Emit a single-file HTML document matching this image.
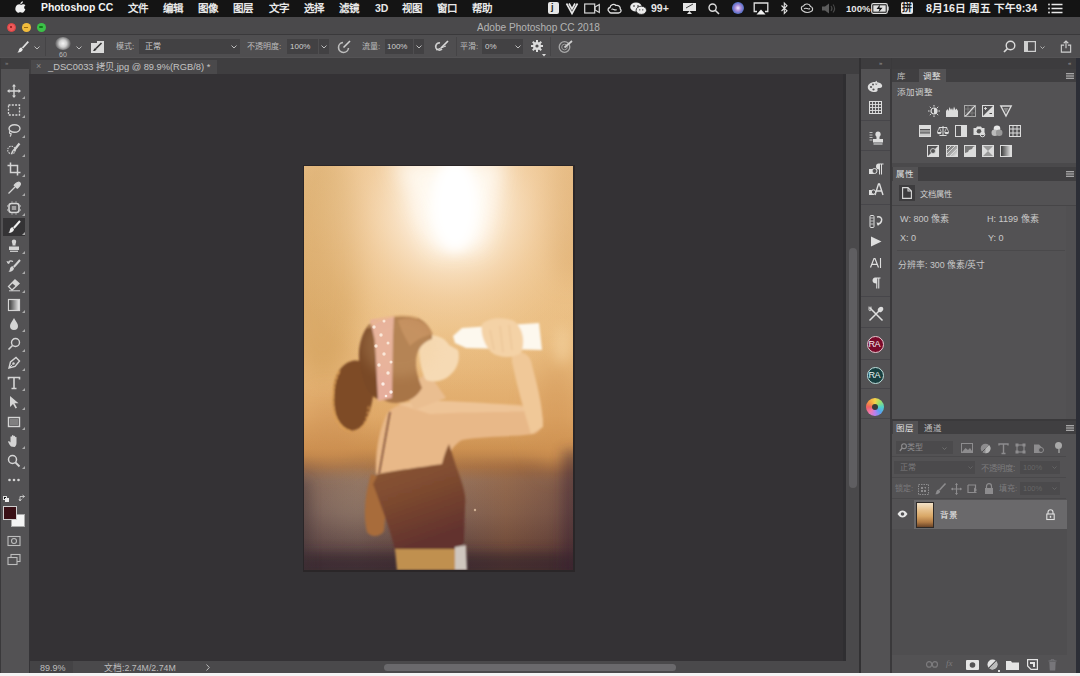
<!DOCTYPE html>
<html lang="zh-CN">
<head>
<meta charset="utf-8">
<style>
*{margin:0;padding:0;box-sizing:border-box;}
html,body{width:1080px;height:676px;overflow:hidden;background:#353437;font-family:"Liberation Sans",sans-serif;position:relative;}
.a{position:absolute;}
.t{position:absolute;white-space:nowrap;line-height:1;}
svg{position:absolute;overflow:visible;}
#menubar{left:0;top:0;width:1080px;height:17px;background:#141414;}
#menubar .t{color:#e8e8e8;font-size:10.5px;top:3px;font-weight:600;}
#titlebar{left:0;top:17px;width:1080px;height:18px;background:#4a494b;border-bottom:1px solid #3a393b;}
#opts{left:0;top:35px;width:1080px;height:23px;background:#4f4e50;border-bottom:1px solid #545355;}
#opts .t{color:#bdbdbd;font-size:8px;top:8px;}
.box{position:absolute;background:#444345;}
#tabstrip{left:29px;top:58px;width:831px;height:16px;background:#3f3e40;}
#canvas{left:30px;top:74px;width:816px;height:587px;background:#343235;}
#toolbar{left:0;top:58px;width:29px;height:615px;background:#535254;}
#status{left:30px;top:661px;width:816px;height:12px;background:#4a494b;}
#white{left:0;top:673px;width:1080px;height:3px;background:#f4f4f4;}
</style>
</head>
<body>
<!-- MENU BAR -->
<div id="menubar" class="a">
  <svg style="left:15.5px;top:1px" width="10" height="12" viewBox="0 0 11 13"><path d="M7.6 0.2c0.1 0.9-0.3 1.7-0.8 2.2-0.5 0.6-1.3 1-2 0.9-0.1-0.8 0.3-1.6 0.8-2.1 0.5-0.6 1.4-1 2-1zM10.3 9.3c-0.3 0.7-0.5 1-0.9 1.6-0.6 0.9-1.4 1.9-2.4 1.9-0.9 0-1.1-0.6-2.3-0.6-1.2 0-1.5 0.6-2.4 0.6-1 0-1.7-1-2.3-1.8C-1.6 8.6-0.1 5 1.5 4c0.6-0.4 1.3-0.6 2-0.6 0.9 0 1.5 0.6 2.3 0.6 0.7 0 1.2-0.6 2.3-0.6 0.8 0 1.7 0.4 2.3 1.2-2 1.1-1.7 4 -0.1 4.7z" fill="#f0f0f0"/></svg>
  <div class="t" style="left:41px;top:3px;font-size:10.4px;font-weight:bold;color:#f4f4f4">Photoshop CC</div>
  <div class="t" style="left:128px">文件</div>
  <div class="t" style="left:163px">编辑</div>
  <div class="t" style="left:198px">图像</div>
  <div class="t" style="left:233px">图层</div>
  <div class="t" style="left:269px">文字</div>
  <div class="t" style="left:304px">选择</div>
  <div class="t" style="left:339px">滤镜</div>
  <div class="t" style="left:375px">3D</div>
  <div class="t" style="left:402px">视图</div>
  <div class="t" style="left:437px">窗口</div>
  <div class="t" style="left:472px">帮助</div>
  <!-- status icons -->
  <div class="a" style="left:548px;top:2px;width:11px;height:12px;background:#e6e6e6;border-radius:2px"></div>
  <div class="t" style="left:551px;top:3px;font-size:9px;color:#222;font-weight:bold">j</div>
  <svg style="left:566px;top:3px" width="12" height="11" viewBox="0 0 12 11"><path d="M0.5 0.5L6 10.5L11.5 0.5M3 0.5L6 6L9 0.5" stroke="#e8e8e8" stroke-width="1.6" fill="none"/></svg>
  <svg style="left:584px;top:3px" width="16" height="11" viewBox="0 0 16 11"><rect x="0.7" y="1" width="10" height="9" stroke="#d8d8d8" stroke-width="1.2" fill="none"/><path d="M11 4L15.3 1.5V9.5L11 7z" stroke="#d8d8d8" stroke-width="1.2" fill="none"/></svg>
  <svg style="left:607px;top:3px" width="15" height="11" viewBox="0 0 15 11"><path d="M2 8.5C0.5 7.5 0.8 4.8 3 4.5 3.5 1.5 7 0.5 9 2.5 11 1.8 13.5 3.5 13.3 6 15 7.5 13.8 10 11.5 10H4C3 10 2.5 9.5 2 8.5z" stroke="#e0e0e0" stroke-width="1.3" fill="none"/><path d="M4.5 6.5c1.5-2 3 2 5 0" stroke="#e0e0e0" stroke-width="1.2" fill="none"/></svg>
  <svg style="left:630px;top:2px" width="17" height="13" viewBox="0 0 17 13"><ellipse cx="6" cy="5" rx="5.8" ry="4.6" fill="#ececec"/><ellipse cx="11.3" cy="8.3" rx="5.2" ry="4.1" fill="#ececec" stroke="#141414" stroke-width="0.8"/><circle cx="4" cy="4" r="0.8" fill="#141414"/><circle cx="8" cy="4" r="0.8" fill="#141414"/><circle cx="9.8" cy="7.8" r="0.6" fill="#141414"/><circle cx="12.8" cy="7.8" r="0.6" fill="#141414"/></svg>
  <div class="t" style="left:651px;top:3px;font-size:10.5px;color:#e6e6e6">99+</div>
  <svg style="left:682px;top:2px" width="15" height="13" viewBox="0 0 15 13"><path d="M1 1H14V9H1z" fill="#e6e6e6"/><path d="M5 12H10L7.5 9z" fill="#e6e6e6"/><path d="M4 6L11 2" stroke="#141414" stroke-width="0.8"/></svg>
  <svg style="left:708px;top:3px" width="12" height="12" viewBox="0 0 12 12"><circle cx="4.6" cy="4.6" r="3.6" stroke="#dcdcdc" stroke-width="1.4" fill="none"/><path d="M7.2 7.2L11 11" stroke="#dcdcdc" stroke-width="1.6"/></svg>
  <div class="a" style="left:732px;top:2px;width:12px;height:12px;border-radius:50%;background:radial-gradient(circle at 50% 50%,#f2e9ff 0,#a98ad8 35%,#5a73c8 65%,#3a2d60 100%)"></div>
  <svg style="left:753px;top:2px" width="16" height="13" viewBox="0 0 16 13"><path d="M4 9.5H1.2V1H14.8V9.5H12" stroke="#e0e0e0" stroke-width="1.3" fill="none"/><path d="M3.5 12.5H12.5L8 7.5z" fill="#f2f2f2"/></svg>
  <svg style="left:780px;top:2px" width="9" height="13" viewBox="0 0 9 13"><path d="M1.5 3.5L7 8.8L4.3 11.5V1L7 3.7L1.5 9" stroke="#e0e0e0" stroke-width="1.1" fill="none"/></svg>
  <svg style="left:800px;top:3px" width="14" height="11" viewBox="0 0 14 11"><path d="M3 8C0.5 6.5 1 3 3.5 3 5 0 9.5 0.5 10.5 3.5 13 4 13.5 7.5 11 8.5 8 10 5 9.5 3 8z" stroke="#d0d0d0" stroke-width="1.2" fill="none"/><path d="M4 6c2-2.5 4 1.5 6-0.5" stroke="#d0d0d0" stroke-width="1.1" fill="none"/></svg>
  <svg style="left:821px;top:3px" width="16" height="11" viewBox="0 0 16 11"><path d="M1 3.5H4L8 0.5V10.5L4 7.5H1z" fill="#5c5c5c"/><path d="M10 3c1.2 1.5 1.2 3.5 0 5M12 1.5c2 2.5 2 5.5 0 8" stroke="#4a4a4a" stroke-width="1.1" fill="none"/></svg>
  <div class="t" style="left:846px;top:4px;font-size:9.6px;color:#e6e6e6">100%</div>
  <svg style="left:871px;top:3px" width="19" height="11" viewBox="0 0 19 11"><rect x="0.7" y="0.7" width="15.6" height="9.6" rx="1.5" stroke="#e0e0e0" stroke-width="1.2" fill="none"/><rect x="2.3" y="2.3" width="12.4" height="6.4" fill="#e0e0e0"/><path d="M17 3.5V7.5" stroke="#e0e0e0" stroke-width="1.4"/><path d="M9 1.5L5.5 6H8.5L7.5 9.5L11.5 4.8H8.5z" fill="#141414"/></svg>
  <div class="a" style="left:901px;top:2px;width:12px;height:12px;background:#e8e8e8;border-radius:2px"></div>
  <div class="t" style="left:901.5px;top:3px;font-size:10px;color:#181818">拼</div>
  <div class="t" style="left:926px;top:3px;font-size:10.7px;color:#ececec">8月16日 周五 下午9:34</div>
  <svg style="left:1048px;top:3px" width="15" height="11" viewBox="0 0 15 11"><path d="M3.5 1.5H14.5M3.5 5.5H14.5M3.5 9.5H14.5" stroke="#e8e8e8" stroke-width="1.4"/><circle cx="1" cy="1.5" r="0.9" fill="#e8e8e8"/><circle cx="1" cy="5.5" r="0.9" fill="#e8e8e8"/><circle cx="1" cy="9.5" r="0.9" fill="#e8e8e8"/></svg>
</div>
<!-- TITLE BAR -->
<div id="titlebar" class="a">
  <div class="a" style="left:6.5px;top:5.5px;width:9px;height:9px;border-radius:50%;background:#ee5a5a;border:0.5px solid #d44"></div>
  <div class="a" style="left:7.5px;top:6.5px;width:0;height:0"></div>
  <div class="a" style="left:21.5px;top:5.5px;width:9px;height:9px;border-radius:50%;background:#f2bc3c"></div>
  <div class="a" style="left:36.5px;top:5.5px;width:9px;height:9px;border-radius:50%;background:#3cc048"></div>
  <div class="a" style="left:10px;top:9px;width:2px;height:2px;border-radius:50%;background:#8a1414"></div>
  <div class="a" style="left:24px;top:9.5px;width:4px;height:1px;background:#9a6a10"></div>
  <div class="a" style="left:39px;top:9px;width:4px;height:2px;border-radius:1px;background:#107a18"></div>
  <div class="t" style="left:477px;top:6px;font-size:10.1px;color:#b4b4b4">Adobe Photoshop CC 2018</div>
</div>
<!-- OPTIONS BAR -->
<div id="opts" class="a">
  <svg style="left:17px;top:6px" width="12" height="12" viewBox="0 0 12 12"><path d="M11.3 0.7L5.5 7" stroke="#e0e0e0" stroke-width="1.8"/><path d="M4.6 6.4C2.8 6.4 2 8 1.8 9.2 1.6 10.3 1 10.9 0.4 11.4 2.8 11.6 5.2 10.7 5.8 8.4z" fill="#e8e8e8"/></svg>
  <svg style="left:34px;top:11px" width="6" height="4" viewBox="0 0 6 4"><path d="M0.5 0.5L3 3L5.5 0.5" stroke="#bdbdbd" stroke-width="1" fill="none"/></svg>
  <div class="a" style="left:45px;top:2px;width:1px;height:19px;background:#454446"></div>
  <div class="a" style="left:55px;top:2px;width:16px;height:13px;border-radius:50%;background:radial-gradient(circle,#f4f4f4 0,#cfcfcf 35%,rgba(120,120,120,0.3) 75%,rgba(80,80,80,0) 100%)"></div>
  <div class="t" style="left:59px;top:16px;font-size:7px;color:#bbb">60</div>
  <svg style="left:76px;top:11px" width="6" height="4" viewBox="0 0 6 4"><path d="M0.5 0.5L3 3L5.5 0.5" stroke="#bdbdbd" stroke-width="1" fill="none"/></svg>
  <div class="a" style="left:91px;top:5.5px;width:13px;height:12px;background:#dadada"></div>
  <div class="a" style="left:91px;top:5.5px;width:6px;height:2px;background:#4f4e50"></div>
  <svg style="left:92px;top:7px" width="11" height="10" viewBox="0 0 11 10"><path d="M9.5 1L4 6.5" stroke="#333" stroke-width="1.6"/><path d="M3.5 6C2 6.5 1.8 8 1 9 2.5 9 4 8.5 4.6 7.2z" fill="#333"/></svg>
  <div class="t" style="left:116px">模式:</div>
  <div class="box" style="left:139px;top:4px;width:101px;height:15px;background:#424143"></div>
  <div class="t" style="left:145px;color:#cfcfcf">正常</div>
  <svg style="left:231px;top:10px" width="6" height="4" viewBox="0 0 6 4"><path d="M0.5 0.5L3 3L5.5 0.5" stroke="#bdbdbd" stroke-width="1" fill="none"/></svg>
  <div class="t" style="left:247px">不透明度:</div>
  <div class="box" style="left:287px;top:4px;width:31px;height:15px;background:#424143"></div>
  <div class="t" style="left:290px;color:#d0d0d0">100%</div>
  <div class="box" style="left:319px;top:4px;width:10px;height:15px;background:#424143"></div>
  <svg style="left:321px;top:10px" width="6" height="4" viewBox="0 0 6 4"><path d="M0.5 0.5L3 3L5.5 0.5" stroke="#bdbdbd" stroke-width="1" fill="none"/></svg>
  <svg style="left:337px;top:5px" width="14" height="13" viewBox="0 0 14 13"><path d="M6 2.5A5 5 0 1 0 11.5 8" stroke="#bdbdbd" stroke-width="1.6" fill="none"/><path d="M13 1L6.5 7.5" stroke="#cfcfcf" stroke-width="1.6"/></svg>
  <div class="t" style="left:362px">流量:</div>
  <div class="box" style="left:385px;top:4px;width:28px;height:15px;background:#424143"></div>
  <div class="t" style="left:387px;color:#d0d0d0">100%</div>
  <div class="box" style="left:414px;top:4px;width:10px;height:15px;background:#424143"></div>
  <svg style="left:416px;top:10px" width="6" height="4" viewBox="0 0 6 4"><path d="M0.5 0.5L3 3L5.5 0.5" stroke="#bdbdbd" stroke-width="1" fill="none"/></svg>
  <svg style="left:434px;top:5px" width="15" height="13" viewBox="0 0 15 13"><path d="M6 3C3 2.5 1 5 2 8 3 10.5 6.5 10.5 8 9" stroke="#cfcfcf" stroke-width="1.7" fill="none"/><path d="M14 1L7 8" stroke="#d8d8d8" stroke-width="1.7"/><path d="M2 10L12 6" stroke="#d8d8d8" stroke-width="1"/></svg>
  <div class="a" style="left:456px;top:2px;width:1px;height:19px;background:#454446"></div>
  <div class="t" style="left:460px">平滑:</div>
  <div class="box" style="left:482px;top:4px;width:41px;height:15px;background:#424143"></div>
  <div class="t" style="left:485px;color:#d0d0d0">0%</div>
  <svg style="left:515px;top:10px" width="6" height="4" viewBox="0 0 6 4"><path d="M0.5 0.5L3 3L5.5 0.5" stroke="#bdbdbd" stroke-width="1" fill="none"/></svg>
  <svg style="left:531px;top:5px" width="12" height="12" viewBox="0 0 12 12"><g fill="#dcdcdc"><circle cx="6" cy="6" r="4"/><rect x="5" y="0" width="2" height="12"/><rect x="0" y="5" width="12" height="2"/><rect x="5" y="0" width="2" height="12" transform="rotate(45 6 6)"/><rect x="5" y="0" width="2" height="12" transform="rotate(-45 6 6)"/></g><circle cx="6" cy="6" r="1.6" fill="#4f4e50"/></svg>
  <svg style="left:542px;top:19px" width="4" height="3" viewBox="0 0 4 3"><path d="M0 0H4L2 2.5z" fill="#ddd"/></svg>
  <div class="a" style="left:550px;top:2px;width:1px;height:19px;background:#454446"></div>
  <svg style="left:558px;top:5px" width="15" height="13" viewBox="0 0 15 13"><circle cx="6.5" cy="7" r="5.3" stroke="#a8a8a8" stroke-width="1.3" fill="none"/><circle cx="6.5" cy="7" r="2.8" stroke="#9a9a9a" stroke-width="1" fill="none"/><path d="M14 1L6.5 7.5" stroke="#d0d0d0" stroke-width="1.7"/></svg>
  <svg style="left:1003px;top:5px" width="13" height="13" viewBox="0 0 13 13"><circle cx="7.5" cy="5.5" r="4.3" stroke="#dadada" stroke-width="1.4" fill="none"/><path d="M4.5 8.5L1 12" stroke="#dadada" stroke-width="1.7"/></svg>
  <svg style="left:1024px;top:6px" width="12" height="11" viewBox="0 0 12 11"><rect x="0.6" y="0.6" width="10.8" height="9.8" stroke="#cfcfcf" stroke-width="1.2" fill="none"/><rect x="1" y="1" width="3" height="9" fill="#cfcfcf"/></svg>
  <svg style="left:1040px;top:11px" width="5" height="3" viewBox="0 0 5 3"><path d="M0.5 0.5L2.5 2.5L4.5 0.5" stroke="#bdbdbd" stroke-width="0.9" fill="none"/></svg>
  <svg style="left:1059.5px;top:4.5px" width="12" height="13" viewBox="0 0 12 14"><path d="M4 5.5H1V13H11V5.5H8" stroke="#d0d0d0" stroke-width="1.2" fill="none"/><path d="M6 9V1M3.5 3.5L6 1L8.5 3.5" stroke="#d0d0d0" stroke-width="1.2" fill="none"/></svg>
</div>
<div id="tabstrip" class="a"></div>
<div class="a" style="left:31px;top:60px;width:186px;height:14px;background:#4a494b"></div>
<div class="t" style="left:36px;top:62px;font-size:9px;color:#8a8a8a">×</div>
<div class="t" style="left:48px;top:62.5px;font-size:9.3px;color:#c4c4c4">_DSC0033 拷贝.jpg @ 89.9%(RGB/8) *</div>
<div id="canvas" class="a"></div>
<!-- PHOTO -->
<div class="a" style="left:302.5px;top:164.5px;width:272px;height:407px;background:#2a2628"></div>
<svg style="left:304px;top:166px;overflow:hidden" width="269" height="404" viewBox="0 0 269 404">
<defs>
  <linearGradient id="bg1" x1="0" y1="0" x2="0" y2="1">
    <stop offset="0" stop-color="#e2b070"/>
    <stop offset="0.4" stop-color="#e6b676"/>
    <stop offset="0.62" stop-color="#dca25e"/>
    <stop offset="0.7" stop-color="#c88a48"/>
    <stop offset="0.745" stop-color="#a87040"/>
    <stop offset="0.78" stop-color="#8e6e5c"/>
    <stop offset="0.86" stop-color="#7a6058"/>
    <stop offset="0.93" stop-color="#5e4644"/>
    <stop offset="1" stop-color="#443038"/>
  </linearGradient>
  <linearGradient id="gnd" x1="0" y1="0" x2="1" y2="0">
    <stop offset="0" stop-color="#5a4448" stop-opacity="0.4"/>
    <stop offset="0.2" stop-color="#887468" stop-opacity="0.25"/>
    <stop offset="0.5" stop-color="#8a5a40" stop-opacity="0.1"/>
    <stop offset="0.75" stop-color="#8a5430" stop-opacity="0.45"/>
    <stop offset="1" stop-color="#5a3430" stop-opacity="0.55"/>
  </linearGradient>
  <linearGradient id="gndv" x1="0" y1="0" x2="0" y2="1">
    <stop offset="0" stop-color="#000"/>
    <stop offset="0.15" stop-color="#fff"/>
    <stop offset="1" stop-color="#fff"/>
  </linearGradient>
  <mask id="gm"><rect y="290" width="269" height="114" fill="url(#gndv)"/></mask>
  <radialGradient id="sun" cx="148" cy="45" r="175" gradientUnits="userSpaceOnUse">
    <stop offset="0" stop-color="#fffefa" stop-opacity="1"/>
    <stop offset="0.2" stop-color="#fff4e6" stop-opacity="0.9"/>
    <stop offset="0.5" stop-color="#f8dab4" stop-opacity="0.55"/>
    <stop offset="0.8" stop-color="#f0c890" stop-opacity="0.2"/>
    <stop offset="1" stop-color="#f0c890" stop-opacity="0"/>
  </radialGradient>
  <linearGradient id="topg" x1="0" y1="0" x2="0.3" y2="1">
    <stop offset="0" stop-color="#8e5a30"/>
    <stop offset="0.45" stop-color="#824e30"/>
    <stop offset="1" stop-color="#62322e"/>
  </linearGradient>
  <linearGradient id="haze" x1="0" y1="0" x2="0" y2="1">
    <stop offset="0" stop-color="#f6d8b0" stop-opacity="0.4"/>
    <stop offset="0.5" stop-color="#f2cc98" stop-opacity="0.3"/>
    <stop offset="0.72" stop-color="#ecc090" stop-opacity="0.1"/>
    <stop offset="1" stop-color="#e8b878" stop-opacity="0"/>
  </linearGradient>
  <filter id="b1" x="-20%" y="-20%" width="140%" height="140%"><feGaussianBlur stdDeviation="1.1"/></filter>
  <filter id="b2" x="-50%" y="-50%" width="200%" height="200%"><feGaussianBlur stdDeviation="2"/></filter>
  <filter id="b4" x="-100%" y="-100%" width="300%" height="300%"><feGaussianBlur stdDeviation="4"/></filter>
  <filter id="b6" x="-200%" y="-200%" width="500%" height="500%"><feGaussianBlur stdDeviation="6"/></filter>
  <filter id="b10" x="-100%" y="-100%" width="300%" height="300%"><feGaussianBlur stdDeviation="10"/></filter>
  <filter id="b12" x="-200%" y="-100%" width="500%" height="300%"><feGaussianBlur stdDeviation="12"/></filter>
</defs>
<rect width="269" height="404" fill="url(#bg1)"/>
<rect y="290" width="269" height="114" fill="url(#gnd)" mask="url(#gm)"/>
<g transform="translate(-304,-166)">
  <ellipse cx="322" cy="265" rx="40" ry="115" fill="#c48c40" opacity="0.7" filter="url(#b12)"/>
  <ellipse cx="330" cy="195" rx="28" ry="34" fill="#c99850" opacity="0.5" filter="url(#b12)"/>
  <ellipse cx="330" cy="430" rx="26" ry="34" fill="#c88848" opacity="0.55" filter="url(#b12)"/>
  <ellipse cx="566" cy="215" rx="22" ry="65" fill="#c88c44" opacity="0.7" filter="url(#b12)"/>
  <ellipse cx="556" cy="415" rx="22" ry="55" fill="#cc8c48" opacity="0.6" filter="url(#b12)"/>
  <ellipse cx="562" cy="345" rx="9" ry="18" fill="#f4d4a0" opacity="0.6" filter="url(#b6)"/>
  <ellipse cx="350" cy="505" rx="30" ry="22" fill="#907a6c" opacity="0.35" filter="url(#b12)"/>
  <rect x="290" y="552" width="300" height="24" fill="#32222a" opacity="0.65" filter="url(#b6)"/>
  <rect x="290" y="480" width="20" height="100" fill="#3e3036" opacity="0.45" filter="url(#b6)"/>
  <rect x="562" y="450" width="20" height="130" fill="#3a2430" opacity="0.5" filter="url(#b6)"/>
</g>
<rect width="269" height="404" fill="url(#haze)"/>
<rect width="269" height="404" fill="url(#sun)"/>
<g transform="translate(-304,-166)">
  <path d="M392 160 L505 160 L482 250 L436 252 Z" fill="#fffaf2" opacity="0.9" filter="url(#b10)"/>
  <ellipse cx="455" cy="205" rx="24" ry="46" fill="#ffffff" filter="url(#b6)"/>
  <!-- figure -->
  <g filter="url(#b1)">
  <path d="M388 412 C398 402 420 399 440 401 C470 403 510 404 538 410 C546 418 544 430 534 434 C510 437 482 436 462 440 C455 444 450 450 448 460 L446 472 L376 474 C375 450 380 426 388 412 Z" fill="#e8b888"/>
  <path d="M398 404 C420 398 470 402 520 405 L538 410 C520 413 470 411 430 414 Z" fill="#f0c89c" opacity="0.75"/>
  <path d="M371 474 C365 494 363 515 367 532 C371 538 380 537 384 531 L388 480 Z" fill="#a86c3a"/>
  <path d="M405 390 L428 372 L446 398 L414 410 Z" fill="#eabe90"/>
  <path d="M512 354 C520 350 528 353 531 361 C536 381 543 405 543 427 L531 434 C524 411 517 386 512 362 Z" fill="#f0c898"/>
  <path d="M453 336 L462 328 L539 323 L542 350 L466 348 L455 343 Z" fill="#fdf8ee"/>
  <path d="M482 324 C490 317 504 317 514 321 C522 327 526 341 521 353 C513 359 499 358 491 352 C485 345 480 334 482 324 Z" fill="#f4d2a6"/>
  <path d="M490 330 L494 350 M500 326 L503 352 M509 325 L512 350" stroke="#dcae80" stroke-width="0.8" opacity="0.6"/>
  <path d="M420 338 C432 333 444 336 449 345 L458 350 C461 360 456 370 451 374 C445 381 434 383 426 380 C420 370 418 352 420 338 Z" fill="#f6dab4"/>
  <path d="M352 361 C340 364 333 378 334 392 C331 407 336 422 346 429 C354 433 363 428 367 418 C373 405 375 388 373 374 C371 365 362 359 352 361 Z" fill="#7e4c28"/>
  <path d="M339 372 C332 384 331 402 335 416 C338 424 344 430 350 431 M362 428 C366 422 368 414 369 404" stroke="#dc9a50" stroke-width="2" stroke-dasharray="3 2" fill="none" opacity="0.7"/>
  <path d="M368 328 C380 316 402 313 418 318 C428 323 433 331 432 339 C426 341 420 345 417 354 C414 366 418 378 422 388 C416 398 408 402 396 403 C384 403 375 396 369 382 C363 367 362 344 368 328 Z" fill="#a87446"/>
  <path d="M398 320 C412 315 428 321 433 334 C424 336 416 340 410 346 C404 336 400 328 398 320 Z" fill="#c08a58" opacity="0.8"/>
  <path d="M361 340 C364 330 368 325 372 323 L381 400 C371 398 364 388 362 375 C358 360 358 350 361 340 Z" fill="#7a4a28"/>
  <path d="M370 320 L394 316 L393 336 L392 398 L378 401 L375 340 Z" fill="#e6ae9c"/>
  <path d="M378 474 C398 470 430 466 442 464 C444 456 446 450 449 444 L456 466 C461 480 467 494 465 506 L464 541 C462 548 459 550 455 551 L395 551 C392 535 382 508 373 484 Z" fill="url(#topg)"/>
  <path d="M395 549 L458 549 L460 570 L397 570 Z" fill="#c09050"/>
  <path d="M455 547 L466 545 L467 570 L455 570 Z" fill="#cfc6be"/>
  </g>
  <g fill="#fff4ee" opacity="0.9">
    <circle cx="374" cy="327" r="1.7"/><circle cx="381" cy="335" r="1.7"/><circle cx="376" cy="346" r="1.7"/><circle cx="384" cy="354" r="1.7"/><circle cx="379" cy="365" r="1.7"/><circle cx="388" cy="373" r="1.7"/><circle cx="383" cy="384" r="1.7"/><circle cx="391" cy="392" r="1.7"/><circle cx="391" cy="362" r="1.5"/><circle cx="388" cy="343" r="1.5"/><circle cx="384" cy="321" r="1.5"/><circle cx="386" cy="396" r="1.3"/>
  </g>
  <path d="M390 412 L379 474" stroke="#6a3a28" stroke-width="1.4" filter="url(#b1)"/>
  <path d="M340 370 C333 382 332 400 335 414 C338 424 343 429 350 431" stroke="#eab060" stroke-width="1.6" fill="none" opacity="0.55" filter="url(#b1)"/>
  <path d="M368 328 C380 316 402 313 418 318" stroke="#f0c080" stroke-width="2" fill="none" opacity="0.5" filter="url(#b1)"/>
  <ellipse cx="400" cy="345" rx="38" ry="32" fill="#f2cc98" opacity="0.18" filter="url(#b6)"/>
  <circle cx="475" cy="510" r="1.2" fill="#f0d0b0" opacity="0.7"/>
</g>
</svg>
<!-- TOOLBAR -->
<div id="toolbar" class="a">
  <div class="a" style="left:0;top:0;width:29px;height:11px;background:#3e3d3f"></div><div class="a" style="left:0;top:0;width:1px;height:615px;background:#3a393b"></div>
  <div class="t" style="left:5px;top:2px;font-size:6px;color:#888">»</div>
  <div class="a" style="left:3px;top:160px;width:22px;height:18px;background:#343335"></div>
  <svg style="left:7px;top:26px" width="14" height="14" viewBox="0 0 14 14"><path d="M7 1V13M1 7H13" stroke="#d4d4d4" stroke-width="1.4"/><path d="M7 0L5 2.5H9zM7 14L5 11.5H9zM0 7L2.5 5V9zM14 7L11.5 5V9z" fill="#d4d4d4"/></svg>
  <svg style="left:22px;top:38px" width="3" height="3" viewBox="0 0 3 3"><path d="M3 0V3H0z" fill="#aaa"/></svg>
  <svg style="left:7px;top:45px" width="14" height="14" viewBox="0 0 14 14"><rect x="1.5" y="2" width="11" height="10" stroke="#d4d4d4" stroke-width="1.3" stroke-dasharray="2 1.3" fill="none"/></svg>
  <svg style="left:22px;top:57px" width="3" height="3" viewBox="0 0 3 3"><path d="M3 0V3H0z" fill="#aaa"/></svg>
  <svg style="left:7px;top:65px" width="14" height="14" viewBox="0 0 14 14"><ellipse cx="7.5" cy="5.5" rx="5.5" ry="3.8" stroke="#d4d4d4" stroke-width="1.4" fill="none"/><path d="M3 8C2 9.5 2.5 11 4 10.5 4.5 12 3.5 13 3 13.5" stroke="#d4d4d4" stroke-width="1.2" fill="none"/></svg>
  <svg style="left:22px;top:77px" width="3" height="3" viewBox="0 0 3 3"><path d="M3 0V3H0z" fill="#aaa"/></svg>
  <svg style="left:7px;top:84px" width="14" height="14" viewBox="0 0 14 14"><circle cx="4.5" cy="8" r="3.8" stroke="#d4d4d4" stroke-width="1.1" stroke-dasharray="1.5 1" fill="none"/><path d="M12.5 1.5L6.5 9" stroke="#d4d4d4" stroke-width="2.2"/><path d="M6 8.5L4.5 12" stroke="#d4d4d4" stroke-width="1.5"/></svg>
  <svg style="left:22px;top:96px" width="3" height="3" viewBox="0 0 3 3"><path d="M3 0V3H0z" fill="#aaa"/></svg>
  <svg style="left:7px;top:104px" width="14" height="14" viewBox="0 0 14 14"><path d="M3.5 0.5V10.5H13.5M0.5 3.5H10.5V13.5" stroke="#d4d4d4" stroke-width="1.5" fill="none"/></svg>
  <svg style="left:22px;top:116px" width="3" height="3" viewBox="0 0 3 3"><path d="M3 0V3H0z" fill="#aaa"/></svg>
  <svg style="left:7px;top:123px" width="14" height="14" viewBox="0 0 14 14"><path d="M1.5 12.5L8 6" stroke="#d4d4d4" stroke-width="1.3"/><path d="M7 4L10 7M9 2.5C10.5 1 12 1 12.8 1.8 13.6 2.6 13.5 4 12 5.5L10.5 7 7.5 4z" stroke="#d4d4d4" stroke-width="1.3" fill="#d4d4d4"/></svg>
  <svg style="left:22px;top:135px" width="3" height="3" viewBox="0 0 3 3"><path d="M3 0V3H0z" fill="#aaa"/></svg>
  <svg style="left:7px;top:143px" width="14" height="14" viewBox="0 0 14 14"><rect x="2" y="2.5" width="10" height="9" rx="2.5" stroke="#d4d4d4" stroke-width="1.6" fill="none"/><rect x="4.8" y="5" width="4.4" height="4" fill="#d4d4d4" opacity="0.6"/><path d="M1 5H0M1 9H0M13 5H14M13 9H14M5 1.5V0.5M9 1.5V0.5M5 12.5V13.5M9 12.5V13.5" stroke="#d4d4d4" stroke-width="1"/></svg>
  <svg style="left:22px;top:155px" width="3" height="3" viewBox="0 0 3 3"><path d="M3 0V3H0z" fill="#aaa"/></svg>
  <svg style="left:7px;top:162px" width="14" height="14" viewBox="0 0 14 14"><path d="M13 1L6.8 8" stroke="#f0f0f0" stroke-width="2"/><path d="M5.8 7.3C3.8 7.3 3 9 2.8 10.4 2.6 11.6 2 12.3 1.2 12.8 3.8 13 6.5 12 7 9.5z" fill="#f0f0f0"/></svg>
  <svg style="left:22px;top:174px" width="3" height="3" viewBox="0 0 3 3"><path d="M3 0V3H0z" fill="#aaa"/></svg>
  <svg style="left:7px;top:181px" width="14" height="14" viewBox="0 0 14 14"><path d="M5.5 1.5H8.5V6.5H5.5z" fill="#d4d4d4"/><circle cx="7" cy="2.8" r="2.2" fill="#d4d4d4"/><path d="M2 7.5H12V11H2z" fill="#d4d4d4"/><path d="M3 12.3H11" stroke="#d4d4d4" stroke-width="1.2"/></svg>
  <svg style="left:22px;top:193px" width="3" height="3" viewBox="0 0 3 3"><path d="M3 0V3H0z" fill="#aaa"/></svg>
  <svg style="left:7px;top:201px" width="14" height="14" viewBox="0 0 14 14"><path d="M13 1L6.8 8" stroke="#d4d4d4" stroke-width="2"/><path d="M5.8 7.3C3.8 7.3 3 9 2.8 10.4 2.6 11.6 2 12.3 1.2 12.8 3.8 13 6.5 12 7 9.5z" fill="#d4d4d4"/><path d="M1 4C2 2 4 1.5 6 2.5" stroke="#d4d4d4" stroke-width="1.2" fill="none"/><path d="M0 2L1 4.5 3 3.5" stroke="#d4d4d4" stroke-width="1" fill="none"/></svg>
  <svg style="left:22px;top:213px" width="3" height="3" viewBox="0 0 3 3"><path d="M3 0V3H0z" fill="#aaa"/></svg>
  <svg style="left:7px;top:220px" width="14" height="14" viewBox="0 0 14 14"><path d="M5 12L1.5 8.5 8 2 12 5.5z" stroke="#d4d4d4" stroke-width="1.3" fill="none"/><path d="M8 2L12 5.5 9 8.5 5 5z" fill="#d4d4d4"/><path d="M2 12.8H13" stroke="#d4d4d4" stroke-width="1"/></svg>
  <svg style="left:22px;top:232px" width="3" height="3" viewBox="0 0 3 3"><path d="M3 0V3H0z" fill="#aaa"/></svg>
  <svg style="left:7px;top:240px" width="14" height="14" viewBox="0 0 14 14"><defs><linearGradient id="gg" x1="0" x2="1"><stop offset="0" stop-color="#333"/><stop offset="1" stop-color="#eee"/></linearGradient></defs><rect x="1.5" y="1.5" width="11" height="11" stroke="#d4d4d4" stroke-width="1.2" fill="url(#gg)"/></svg>
  <svg style="left:22px;top:252px" width="3" height="3" viewBox="0 0 3 3"><path d="M3 0V3H0z" fill="#aaa"/></svg>
  <svg style="left:7px;top:259px" width="14" height="14" viewBox="0 0 14 14"><path d="M7 1C5 4.5 3 6.5 3 9A4 4 0 0 0 11 9C11 6.5 9 4.5 7 1z" fill="#d4d4d4"/></svg>
  <svg style="left:22px;top:271px" width="3" height="3" viewBox="0 0 3 3"><path d="M3 0V3H0z" fill="#aaa"/></svg>
  <svg style="left:7px;top:279px" width="14" height="14" viewBox="0 0 14 14"><circle cx="8.5" cy="5.5" r="4" stroke="#d4d4d4" stroke-width="1.4" fill="none"/><path d="M5.5 8.5L1.5 12.5" stroke="#d4d4d4" stroke-width="1.6"/></svg>
  <svg style="left:22px;top:291px" width="3" height="3" viewBox="0 0 3 3"><path d="M3 0V3H0z" fill="#aaa"/></svg>
  <svg style="left:7px;top:298px" width="14" height="14" viewBox="0 0 14 14"><path d="M2 12L3.5 6 9 1.5 12.5 5 8 10.5z" stroke="#d4d4d4" stroke-width="1.4" fill="none"/><circle cx="6.5" cy="7.5" r="1.2" fill="#d4d4d4"/><path d="M2 12L5.5 8.5" stroke="#d4d4d4" stroke-width="1"/></svg>
  <svg style="left:22px;top:310px" width="3" height="3" viewBox="0 0 3 3"><path d="M3 0V3H0z" fill="#aaa"/></svg>
  <svg style="left:7px;top:318px" width="14" height="14" viewBox="0 0 14 14"><path d="M1.5 3.5V1.5H12.5V3.5M7 1.5V12.5M4.5 12.5H9.5" stroke="#d4d4d4" stroke-width="1.6" fill="none"/></svg>
  <svg style="left:22px;top:330px" width="3" height="3" viewBox="0 0 3 3"><path d="M3 0V3H0z" fill="#aaa"/></svg>
  <svg style="left:7px;top:337px" width="14" height="14" viewBox="0 0 14 14"><path d="M3 1V12L6 9 8.5 13.5 10 12.8 7.5 8.3H11.5z" fill="#d4d4d4"/></svg>
  <svg style="left:22px;top:349px" width="3" height="3" viewBox="0 0 3 3"><path d="M3 0V3H0z" fill="#aaa"/></svg>
  <svg style="left:7px;top:357px" width="14" height="14" viewBox="0 0 14 14"><rect x="1.5" y="2.5" width="11" height="9" stroke="#d4d4d4" stroke-width="1.4" fill="none"/><rect x="3" y="4" width="8" height="6" fill="#d4d4d4" opacity="0.35"/></svg>
  <svg style="left:22px;top:369px" width="3" height="3" viewBox="0 0 3 3"><path d="M3 0V3H0z" fill="#aaa"/></svg>
  <svg style="left:7px;top:376px" width="14" height="14" viewBox="0 0 14 14"><path d="M4 12.5C2.5 11 1.5 9 1 7.5 1.8 7 2.8 7.3 3.5 8.5V3C3.5 2 5 2 5 3V6.5 1.8C5 0.8 6.5 0.8 6.5 1.8V6.5 2.5C6.5 1.5 8 1.5 8 2.5V7 3.5C8 2.5 9.5 2.5 9.5 3.5V9C9.5 11 8.5 12.5 7.5 13z" fill="#d4d4d4"/></svg>
  <svg style="left:22px;top:388px" width="3" height="3" viewBox="0 0 3 3"><path d="M3 0V3H0z" fill="#aaa"/></svg>
  <svg style="left:7px;top:396px" width="14" height="14" viewBox="0 0 14 14"><circle cx="5.5" cy="5.5" r="4" stroke="#d4d4d4" stroke-width="1.5" fill="none"/><path d="M8.5 8.5L12.5 12.5" stroke="#d4d4d4" stroke-width="1.8"/></svg>
  <svg style="left:22px;top:408px" width="3" height="3" viewBox="0 0 3 3"><path d="M3 0V3H0z" fill="#aaa"/></svg>
  <svg style="left:7px;top:415px" width="14" height="14" viewBox="0 0 14 14"><circle cx="2.5" cy="7" r="1.3" fill="#d4d4d4"/><circle cx="7" cy="7" r="1.3" fill="#d4d4d4"/><circle cx="11.5" cy="7" r="1.3" fill="#d4d4d4"/></svg>
  <svg style="left:7px;top:476px" width="14" height="14" viewBox="0 0 14 14"><rect x="1" y="2.5" width="12" height="9" stroke="#bdbdbd" stroke-width="1.1" fill="none"/><circle cx="7" cy="7" r="2.5" stroke="#bdbdbd" stroke-width="1.1" fill="none"/></svg>
  <svg style="left:7px;top:495px" width="14" height="14" viewBox="0 0 14 14"><rect x="4" y="1.5" width="9" height="7" stroke="#bdbdbd" stroke-width="1.1" fill="none"/><rect x="1" y="4.5" width="9" height="7" stroke="#bdbdbd" stroke-width="1.1" fill="#535254"/></svg>
  <div class="a" style="left:3px;top:438px;width:4px;height:4px;background:#111;border:0.5px solid #ddd"></div>
  <div class="a" style="left:5px;top:440px;width:4px;height:4px;background:#eee"></div>
  <svg style="left:19px;top:437px" width="7" height="7" viewBox="0 0 7 7"><path d="M1 6V1.5H5.5M3.5 0L5.5 1.5 3.5 3M0 4L1 6 2.5 4" stroke="#ccc" stroke-width="0.9" fill="none"/></svg>
  <div class="a" style="left:10.5px;top:456px;width:14px;height:13px;background:#f4f4f4;border:1px solid #aaa"></div>
  <div class="a" style="left:3px;top:448px;width:14px;height:14px;background:#3a1016;border:1px solid #cfcfcf"></div>
</div>
<div id="status" class="a"></div>
<div class="a" style="left:30px;top:661px;width:43px;height:12px;background:#444345"></div>
<div class="t" style="left:40px;top:663.5px;font-size:9px;color:#bdbdbd">89.9%</div>
<div class="t" style="left:104px;top:663.5px;font-size:8.8px;color:#bdbdbd">文档:2.74M/2.74M</div>
<svg style="left:206px;top:664px" width="4" height="7" viewBox="0 0 4 7"><path d="M0.5 0.5L3.3 3.5 0.5 6.5" stroke="#bbb" stroke-width="1" fill="none"/></svg>
<div class="a" style="left:384px;top:664px;width:292px;height:7px;border-radius:3.5px;background:#6a696c"></div>
<div class="a" style="left:843px;top:74px;width:3px;height:587px;background:#2f2e31"></div>
<div class="a" style="left:846px;top:74px;width:14px;height:599px;background:#4a494b"></div>
<div class="a" style="left:849px;top:248px;width:8px;height:240px;border-radius:4px;background:#5f5e61"></div>
<div class="a" style="left:859px;top:58px;width:2px;height:615px;background:#323133"></div>
<!-- ICON COLUMN -->
<div class="a" style="left:861px;top:58px;width:30px;height:615px;background:#535254"></div>
<div class="a" style="left:890px;top:58px;width:2px;height:615px;background:#3a393b"></div>
<div class="a" style="left:861px;top:58px;width:30px;height:11px;background:#3d3c3e"></div>
<div class="a" style="left:861px;top:120px;width:29px;height:1px;background:#47464a"></div>
<div class="a" style="left:861px;top:150px;width:29px;height:1px;background:#47464a"></div>
<div class="a" style="left:861px;top:204px;width:29px;height:1px;background:#47464a"></div>
<div class="a" style="left:861px;top:296px;width:29px;height:1px;background:#47464a"></div>
<div class="a" style="left:861px;top:327px;width:29px;height:1px;background:#47464a"></div>
<div class="a" style="left:861px;top:359px;width:29px;height:1px;background:#47464a"></div>
<div class="a" style="left:861px;top:388px;width:29px;height:1px;background:#47464a"></div>
<div class="a" style="left:861px;top:418px;width:29px;height:1px;background:#47464a"></div>
<svg style="left:867.0px;top:81.0px" width="16" height="12" viewBox="0 0 16 12"><path d="M8 1C3.5 1 0.5 3.5 0.8 6.5 1 9 3.5 11 8 11 10 11 11 10 10.5 8.5 10 7.5 11 6.8 12.5 7 15 7 15.5 5.5 15 4 14 1.8 11 1 8 1z" fill="#dedede"/><circle cx="4" cy="6" r="1.1" fill="#535254"/><circle cx="6.5" cy="8.5" r="1.1" fill="#535254"/><circle cx="6" cy="3.5" r="1" fill="#535254"/><circle cx="9.5" cy="3" r="1" fill="#535254"/><path d="M9 0L10.5 4" stroke="#dedede" stroke-width="1.2"/></svg>
<svg style="left:868.5px;top:100.5px" width="13" height="13" viewBox="0 0 13 13"><rect x="0.5" y="0.5" width="12" height="12" fill="none" stroke="#dedede" stroke-width="1"/><path d="M3.5 0.5V12.5M6.5 0.5V12.5M9.5 0.5V12.5M0.5 3.5H12.5M0.5 6.5H12.5M0.5 9.5H12.5" stroke="#dedede" stroke-width="0.9"/></svg>
<svg style="left:868.5px;top:131.0px" width="15" height="14" viewBox="0 0 15 14"><path d="M0.5 1.5H3.5M0.5 4H3.5M0.5 6.5H3.5M0.5 9H3.5" stroke="#bbb" stroke-width="1"/><circle cx="9" cy="3.2" r="2.6" fill="#dedede"/><path d="M7.5 5H10.5V8H14V11.5H4V8H7.5z" fill="#dedede"/><path d="M4.5 13H13.5" stroke="#dedede" stroke-width="1.1"/></svg>
<svg style="left:868.0px;top:163.0px" width="16" height="12" viewBox="0 0 16 12"><path d="M9.5 0.5H15.5V1.5H14V11.5H13V1.5H12V11.5H11V6.5C9 6.5 8 5.3 8 3.5 8 1.7 9 0.5 10.5 0.5z" fill="#dedede"/><rect x="1" y="6" width="5" height="5" fill="#dedede"/><circle cx="6.5" cy="8" r="2.5" fill="#535254" stroke="#dedede" stroke-width="1"/></svg>
<svg style="left:868.0px;top:182.5px" width="16" height="13" viewBox="0 0 16 13"><path d="M7 12L10.5 1H11.5L15 12M8.5 8H13.5" stroke="#dedede" stroke-width="1.4" fill="none"/><rect x="1" y="7" width="5" height="5" fill="#dedede"/><circle cx="5.5" cy="9" r="2.2" fill="#535254" stroke="#dedede" stroke-width="1"/></svg>
<svg style="left:869.0px;top:214.5px" width="14" height="13" viewBox="0 0 14 13"><rect x="1" y="0.5" width="4" height="12" rx="1" fill="none" stroke="#dedede" stroke-width="1"/><path d="M1.5 3H4.5M1.5 6H4.5M1.5 9H4.5" stroke="#dedede" stroke-width="0.8"/><path d="M8 2C11 1 13.5 3 12.5 6 12 8 10 9 8.5 9.5" stroke="#dedede" stroke-width="1.5" fill="none"/><path d="M7.5 7.5L9 11 11 8z" fill="#dedede"/></svg>
<svg style="left:870.0px;top:235.5px" width="12" height="11" viewBox="0 0 12 11"><path d="M1 0.5L11.5 5.5 1 10.5z" fill="#dedede"/></svg>
<svg style="left:870.0px;top:258.0px" width="12" height="10" viewBox="0 0 12 10"><path d="M0.5 9.5L4 0.5H5L8.5 9.5M2 6.3H7" stroke="#dedede" stroke-width="1.2" fill="none"/><path d="M10.5 0V10" stroke="#dedede" stroke-width="1.1"/></svg>
<svg style="left:871.0px;top:277.0px" width="10" height="12" viewBox="0 0 10 12"><path d="M4 0.5H9.5V1.5H8.3V11.5H7.2V1.5H6.3V11.5H5.2V6.5C3 6.5 1.5 5.3 1.5 3.5 1.5 1.7 3 0.5 4 0.5z" fill="#dedede"/></svg>
<svg style="left:868.0px;top:306.0px" width="16" height="16" viewBox="0 0 16 16"><path d="M1.5 1.5L14.5 14.5M14.5 1.5L1.5 14.5" stroke="#dedede" stroke-width="1.5"/><ellipse cx="12.5" cy="3.5" rx="2.3" ry="3" transform="rotate(45 12.5 3.5)" fill="#dedede"/><path d="M1 0.5V4M3 0.5V4M1 4C1 5 3 5 3 4" stroke="#dedede" stroke-width="0.9" fill="none"/></svg>
<div class="a" style="left:866.5px;top:336px;width:17px;height:17px;border-radius:50%;background:#7a0a2a;border:1.3px solid #e8c8d0"></div>
<div class="t" style="left:868.5px;top:340px;font-size:9px;color:#f2f2f2;letter-spacing:-0.5px">RA</div>
<div class="a" style="left:866.5px;top:367px;width:17px;height:17px;border-radius:50%;background:#173f40;border:1.3px solid #bfe0dd"></div>
<div class="t" style="left:868.5px;top:371px;font-size:9px;color:#e8f4f2;letter-spacing:-0.5px">RA</div>
<div class="a" style="left:866px;top:398px;width:18px;height:18px;border-radius:50%;background:conic-gradient(from 0deg,#f6d24a,#9be06a,#4fd0c8,#5aa0f0,#b880f0,#f07ab0,#f06060,#f6a040,#f6d24a)"></div>
<div class="a" style="left:872px;top:404px;width:6px;height:6px;border-radius:50%;background:#3a3a3a"></div>
<!-- RIGHT PANELS -->
<div class="a" style="left:892px;top:58px;width:188px;height:615px;background:#3d3c3e"></div>
<div class="t" style="left:879px;top:60px;font-size:6px;color:#999">»</div>
<div class="t" style="left:1068px;top:60px;font-size:6px;color:#999">«</div>
<div class="a" style="left:1076px;top:58px;width:4px;height:615px;background:#2c2e36"></div>
<!-- adjustments -->
<div class="a" style="left:892px;top:69px;width:184px;height:13px;background:#403f41"></div>
<div class="a" style="left:919px;top:69px;width:27px;height:13px;background:#535254"></div>
<div class="t" style="left:897px;top:71.5px;font-size:8.5px;color:#bdbdbd">库</div>
<div class="t" style="left:923px;top:71.5px;font-size:8.5px;color:#e0e0e0">调整</div>
<svg style="left:1066px;top:73px" width="8" height="6" viewBox="0 0 8 6"><path d="M0 0.7H8M0 3H8M0 5.3H8" stroke="#c8c8c8" stroke-width="1.1"/></svg>
<div class="a" style="left:892px;top:82px;width:184px;height:81px;background:#535254"></div>
<div class="t" style="left:897px;top:88px;font-size:8.5px;color:#cfcfcf">添加调整</div>
<svg style="left:928px;top:105px" width="12" height="12" viewBox="0 0 12 12"><circle cx="6" cy="6" r="3" fill="none" stroke="#dcdcdc" stroke-width="1.2"/><path d="M6 3A3 3 0 0 1 6 9z" fill="#dcdcdc"/><path d="M6 0V1.6M6 10.4V12M0 6H1.6M10.4 6H12M1.8 1.8L2.9 2.9M9.1 9.1L10.2 10.2M1.8 10.2L2.9 9.1M9.1 2.9L10.2 1.8" stroke="#dcdcdc" stroke-width="1"/></svg>
<svg style="left:946px;top:105px" width="12" height="12" viewBox="0 0 12 12"><path d="M0 11V6L1.5 4 2.5 6 3.5 2 5 5 6 3 7 5.5 8 1.5 9.5 5 10.5 3.5 12 6V11z" fill="#dcdcdc"/><path d="M0 11.5H12" stroke="#dcdcdc" stroke-width="1"/></svg>
<svg style="left:964px;top:105px" width="12" height="12" viewBox="0 0 12 12"><rect x="0.5" y="0.5" width="11" height="11" fill="none" stroke="#aaa" stroke-width="1"/><path d="M4 0.5V11.5M8 0.5V11.5M0.5 4H11.5M0.5 8H11.5" stroke="#888" stroke-width="0.7"/><path d="M1 11C4 10 8 3 11 1" stroke="#dcdcdc" stroke-width="1.3" fill="none"/></svg>
<svg style="left:982px;top:105px" width="12" height="12" viewBox="0 0 12 12"><rect x="0.5" y="0.5" width="11" height="11" fill="none" stroke="#dcdcdc" stroke-width="1"/><path d="M1 11L11 1V11z" fill="#dcdcdc"/><path d="M2 3.5H5M3.5 2V5" stroke="#dcdcdc" stroke-width="0.9"/><path d="M7.5 8.5H10" stroke="#333" stroke-width="0.9"/></svg>
<svg style="left:1000px;top:105px" width="12" height="12" viewBox="0 0 12 12"><path d="M0.8 1H11.2L6 11z" fill="none" stroke="#dcdcdc" stroke-width="1.4"/><path d="M3.5 3H8.5L6 8z" fill="#888"/></svg>
<svg style="left:919px;top:125px" width="12" height="12" viewBox="0 0 12 12"><rect x="0.5" y="0.5" width="11" height="11" fill="none" stroke="#dcdcdc" stroke-width="1"/><rect x="1" y="1" width="10" height="3" fill="#dcdcdc"/><rect x="1" y="5" width="10" height="2.5" fill="#999"/><rect x="1" y="8.5" width="10" height="2.5" fill="#ccc"/></svg>
<svg style="left:937px;top:125px" width="12" height="12" viewBox="0 0 12 12"><path d="M6 1V10M2 2.5H10M2.5 10.5H9.5" stroke="#dcdcdc" stroke-width="1"/><path d="M0 7A2.3 2.3 0 0 0 4.6 7zM7.4 7A2.3 2.3 0 0 0 12 7z" fill="#dcdcdc"/><path d="M2.3 2.5L0.3 7M2.3 2.5L4.3 7M9.7 2.5L7.7 7M9.7 2.5L11.7 7" stroke="#dcdcdc" stroke-width="0.7"/></svg>
<svg style="left:955px;top:125px" width="12" height="12" viewBox="0 0 12 12"><rect x="0.5" y="0.5" width="11" height="11" fill="none" stroke="#dcdcdc" stroke-width="1"/><rect x="6" y="1" width="5" height="10" fill="#dcdcdc"/></svg>
<svg style="left:973px;top:125px" width="12" height="12" viewBox="0 0 12 12"><path d="M0.5 3H3L4 1.5H8L9 3H11.5V10H0.5z" fill="#dcdcdc"/><circle cx="6" cy="6.3" r="2.3" fill="#555"/><circle cx="9.5" cy="9.5" r="2.3" fill="none" stroke="#dcdcdc" stroke-width="1"/></svg>
<svg style="left:991px;top:125px" width="12" height="12" viewBox="0 0 12 12"><circle cx="6" cy="3.8" r="3.3" fill="#e8e8e8"/><circle cx="3.8" cy="7.8" r="3.3" fill="#bbb"/><circle cx="8.2" cy="7.8" r="3.3" fill="#999"/></svg>
<svg style="left:1009px;top:125px" width="12" height="12" viewBox="0 0 12 12"><rect x="0.5" y="0.5" width="11" height="11" fill="none" stroke="#dcdcdc" stroke-width="1"/><path d="M4 0.5V11.5M8 0.5V11.5M0.5 4H11.5M0.5 8H11.5" stroke="#dcdcdc" stroke-width="1"/></svg>
<svg style="left:927px;top:145px" width="12" height="12" viewBox="0 0 12 12"><rect x="0.5" y="0.5" width="11" height="11" fill="none" stroke="#dcdcdc" stroke-width="1"/><path d="M1 11L11 1V11z" fill="#dcdcdc"/><circle cx="6" cy="6" r="2.5" fill="#555" stroke="#dcdcdc" stroke-width="0.8"/></svg>
<svg style="left:946px;top:145px" width="12" height="12" viewBox="0 0 12 12"><defs><linearGradient id="ag1" x1="0" y1="0" x2="1" y2="1"><stop offset="0" stop-color="#555"/><stop offset="1" stop-color="#eee"/></linearGradient></defs><rect x="0.5" y="0.5" width="11" height="11" fill="url(#ag1)" stroke="#dcdcdc" stroke-width="1"/><path d="M1 5L5 1M1 9L9 1M4 11L11 4" stroke="#ddd" stroke-width="0.9"/></svg>
<svg style="left:964px;top:145px" width="12" height="12" viewBox="0 0 12 12"><rect x="0.5" y="0.5" width="11" height="11" fill="#777" stroke="#dcdcdc" stroke-width="1"/><path d="M1 11V8L4 7 5 5 8 4 9 2 11 1V11z" fill="#dcdcdc"/></svg>
<svg style="left:982px;top:145px" width="12" height="12" viewBox="0 0 12 12"><rect x="0.5" y="0.5" width="11" height="11" fill="#999" stroke="#dcdcdc" stroke-width="1"/><path d="M1 1L6 6 1 11zM11 1L6 6 11 11z" fill="#dcdcdc"/></svg>
<svg style="left:1000px;top:145px" width="12" height="12" viewBox="0 0 12 12"><defs><linearGradient id="ag2" x1="0" x2="1"><stop offset="0" stop-color="#333"/><stop offset="1" stop-color="#eee"/></linearGradient></defs><rect x="0.5" y="0.5" width="11" height="11" fill="url(#ag2)" stroke="#dcdcdc" stroke-width="1"/></svg>
<div class="a" style="left:892px;top:163px;width:184px;height:4px;background:#4a494b"></div>
<!-- properties -->
<div class="a" style="left:892px;top:167px;width:184px;height:14px;background:#403f41"></div>
<div class="a" style="left:893px;top:167px;width:25px;height:14px;background:#535254"></div>
<div class="t" style="left:896px;top:170px;font-size:8.5px;color:#e0e0e0">属性</div>
<svg style="left:1066px;top:171px" width="8" height="6" viewBox="0 0 8 6"><path d="M0 0.7H8M0 3H8M0 5.3H8" stroke="#c8c8c8" stroke-width="1.1"/></svg>
<div class="a" style="left:892px;top:181px;width:184px;height:238px;background:#535254"></div>
<div class="a" style="left:1066px;top:205px;width:10px;height:214px;background:#515052"></div>
<div class="a" style="left:899px;top:185px;width:16px;height:16px;background:#3d3c3e"></div>
<svg style="left:902px;top:187px" width="10" height="12" viewBox="0 0 10 12"><path d="M0.6 0.6H6L9.4 4V11.4H0.6z M6 0.6V4H9.4" stroke="#d8d8d8" stroke-width="1.1" fill="none"/></svg>
<div class="t" style="left:920px;top:191px;font-size:8.2px;color:#d0d0d0">文档属性</div>
<div class="a" style="left:892px;top:204.5px;width:184px;height:1px;background:#464547"></div>
<div class="t" style="left:900px;top:215px;font-size:9.1px;color:#c8c8c8">W: 800 像素</div>
<div class="t" style="left:987px;top:215px;font-size:9.1px;color:#c8c8c8">H: 1199 像素</div>
<div class="t" style="left:900px;top:233.5px;font-size:9.1px;color:#c8c8c8">X: 0</div>
<div class="t" style="left:988px;top:233.5px;font-size:9.1px;color:#c8c8c8">Y: 0</div>
<div class="a" style="left:897px;top:250px;width:168px;height:1px;background:#4a494b"></div>
<div class="t" style="left:898px;top:260.5px;font-size:8.8px;color:#c8c8c8">分辨率: 300 像素/英寸</div>
<div class="a" style="left:892px;top:419px;width:184px;height:2px;background:#3a393b"></div>
<!-- layers -->
<div class="a" style="left:892px;top:421px;width:184px;height:13px;background:#403f41"></div>
<div class="a" style="left:893px;top:421px;width:25px;height:13px;background:#535254"></div>
<div class="t" style="left:896px;top:423.5px;font-size:8.5px;color:#e0e0e0">图层</div>
<div class="t" style="left:924px;top:423.5px;font-size:8.5px;color:#bdbdbd">通道</div>
<svg style="left:1066px;top:425px" width="8" height="6" viewBox="0 0 8 6"><path d="M0 0.7H8M0 3H8M0 5.3H8" stroke="#c8c8c8" stroke-width="1.1"/></svg>
<div class="a" style="left:892px;top:434px;width:184px;height:239px;background:#535254"></div>
<!-- layers content -->
<div class="a" style="left:896px;top:441px;width:57px;height:13px;background:#4b4a4c"></div>
<svg style="left:899px;top:443px" width="8" height="9" viewBox="0 0 8 9"><circle cx="5" cy="3.2" r="2.4" stroke="#8d8c8e" stroke-width="1.1" fill="none"/><path d="M3.2 5L0.8 8" stroke="#8d8c8e" stroke-width="1.3"/></svg>
<div class="t" style="left:907px;top:443.5px;font-size:8px;color:#8d8c8e">类型</div>
<svg style="left:942px;top:447px" width="5" height="3" viewBox="0 0 5 3"><path d="M0.5 0.5L2.5 2.5 4.5 0.5" stroke="#777" stroke-width="0.8" fill="none"/></svg>
<svg style="left:961px;top:443px" width="12" height="10" viewBox="0 0 12 10"><rect x="0.5" y="0.5" width="11" height="9" fill="none" stroke="#8d8c8e" stroke-width="1"/><path d="M1 9L4.5 5 7 7 9 5 11 8V9z" fill="#8d8c8e"/></svg>
<svg style="left:980px;top:442.5px" width="11" height="11" viewBox="0 0 11 11"><circle cx="5.5" cy="5.5" r="4.8" fill="#8d8c8e"/><path d="M2 9L9 2" stroke="#535254" stroke-width="1"/><path d="M5.5 5.5L9 2A4.8 4.8 0 0 1 5.5 10.3z" fill="#b5b5b5"/></svg>
<svg style="left:998px;top:442.5px" width="11" height="11" viewBox="0 0 11 11"><path d="M1 2.5V1H10V2.5M5.5 1V10.5M3.5 10.5H7.5" stroke="#8d8c8e" stroke-width="1.4" fill="none"/></svg>
<svg style="left:1015px;top:442.5px" width="11" height="11" viewBox="0 0 11 11"><rect x="2" y="2" width="7" height="7" fill="none" stroke="#8d8c8e" stroke-width="1.1"/><rect x="0.5" y="0.5" width="3" height="3" fill="#8d8c8e"/><rect x="7.5" y="0.5" width="3" height="3" fill="#8d8c8e"/><rect x="0.5" y="7.5" width="3" height="3" fill="#8d8c8e"/><rect x="7.5" y="7.5" width="3" height="3" fill="#8d8c8e"/></svg>
<svg style="left:1033px;top:442px" width="12" height="12" viewBox="0 0 12 12"><path d="M1 2.5H6L9 5.5V11H1z" fill="#8d8c8e"/><circle cx="8" cy="8" r="2.5" fill="#535254" stroke="#8d8c8e" stroke-width="1"/></svg>
<div class="a" style="left:1055px;top:442px;width:7px;height:7px;border-radius:50%;background:#a9a9a9"></div>
<div class="a" style="left:1057.5px;top:449px;width:2px;height:4px;background:#8a8a8a"></div>
<div class="a" style="left:892px;top:456px;width:174px;height:1px;background:#4a494b"></div>
<div class="a" style="left:894px;top:461px;width:81px;height:13px;background:#4b4a4c"></div>
<div class="t" style="left:900px;top:463.5px;font-size:8px;color:#7c7b7d">正常</div>
<svg style="left:968px;top:466px" width="5" height="3" viewBox="0 0 5 3"><path d="M0.5 0.5L2.5 2.5 4.5 0.5" stroke="#6a6a6a" stroke-width="0.8" fill="none"/></svg>
<div class="t" style="left:981px;top:463.5px;font-size:8.3px;color:#7c7b7d">不透明度:</div>
<div class="a" style="left:1020px;top:461px;width:40px;height:13px;background:#4b4a4c"></div>
<div class="t" style="left:1023px;top:464px;font-size:7.5px;color:#666">100%</div>
<svg style="left:1052px;top:466px" width="5" height="3" viewBox="0 0 5 3"><path d="M0.5 0.5L2.5 2.5 4.5 0.5" stroke="#6a6a6a" stroke-width="0.8" fill="none"/></svg>
<div class="a" style="left:892px;top:477px;width:174px;height:1px;background:#4a494b"></div>
<div class="t" style="left:895px;top:484.5px;font-size:8px;color:#7c7b7d">锁定:</div>
<svg style="left:918px;top:483.5px" width="11" height="11" viewBox="0 0 11 11"><rect x="0.5" y="0.5" width="10" height="10" fill="none" stroke="#8d8c8e" stroke-width="1" stroke-dasharray="1.5 1"/><path d="M3 3H5V5H3zM6 6H8V8H6zM6 3H8V5zM3 6H5V8H3z" fill="#8d8c8e"/></svg>
<svg style="left:935px;top:483px" width="11" height="12" viewBox="0 0 11 12"><path d="M10.5 0.5L4.5 7" stroke="#8d8c8e" stroke-width="1.6"/><path d="M3.8 6.5C2 6.5 1.5 8 1.3 9 1.1 10 0.8 10.8 0.3 11.3 2.5 11.5 4.8 10.5 5.2 8.5z" fill="#8d8c8e"/></svg>
<svg style="left:950.5px;top:483px" width="11" height="12" viewBox="0 0 11 12"><path d="M5.5 0.5V11.5M0.5 6H10.5" stroke="#8d8c8e" stroke-width="1.1"/><path d="M5.5 0L4 2H7zM5.5 12L4 10H7zM0 6L2 4.5V7.5zM11 6L9 4.5V7.5z" fill="#8d8c8e"/></svg>
<svg style="left:967px;top:483.5px" width="11" height="10" viewBox="0 0 11 10"><path d="M1 1V8.5H9.5M1 1H8.5V7.5" stroke="#8d8c8e" stroke-width="1.2" fill="none"/><path d="M7 3.5L10 6 7 8.5" fill="#8d8c8e"/></svg>
<svg style="left:984px;top:483px" width="10" height="11" viewBox="0 0 10 11"><path d="M2.5 5V3.2A2.5 2.5 0 0 1 7.5 3.2V5" stroke="#8d8c8e" stroke-width="1.2" fill="none"/><rect x="1" y="5" width="8" height="6" fill="#8d8c8e"/></svg>
<div class="t" style="left:999px;top:484.5px;font-size:8px;color:#7c7b7d">填充:</div>
<div class="a" style="left:1020px;top:482px;width:40px;height:13px;background:#4b4a4c"></div>
<div class="t" style="left:1023px;top:485px;font-size:7.5px;color:#666">100%</div>
<svg style="left:1052px;top:487px" width="5" height="3" viewBox="0 0 5 3"><path d="M0.5 0.5L2.5 2.5 4.5 0.5" stroke="#6a6a6a" stroke-width="0.8" fill="none"/></svg>
<div class="a" style="left:892px;top:498px;width:174px;height:1px;background:#4a494b"></div>
<div class="a" style="left:914px;top:500px;width:153px;height:29px;background:#6a696b"></div>
<svg style="left:897px;top:510px" width="11" height="8" viewBox="0 0 11 8"><path d="M0.5 4C2 1.5 3.8 0.5 5.5 0.5 7.2 0.5 9 1.5 10.5 4 9 6.5 7.2 7.5 5.5 7.5 3.8 7.5 2 6.5 0.5 4z" fill="#e8e8e8"/><circle cx="5.5" cy="4" r="1.8" fill="#535254"/></svg>
<div class="a" style="left:915.5px;top:501.5px;width:18.5px;height:26.5px;background:#2e2a28"></div>
<div class="a" id="thumb" style="left:916.5px;top:502.5px;width:16.5px;height:24.5px;background:linear-gradient(180deg,#f3e2c8 0%,#e6c08c 30%,#d9a766 55%,#b07a44 80%,#6a4428 100%)"></div>
<div class="t" style="left:940px;top:510.5px;font-size:8.5px;color:#ececec">背景</div>
<svg style="left:1046px;top:508.5px" width="9" height="11" viewBox="0 0 9 11"><path d="M2 5V3.2A2.5 2.5 0 0 1 7 3.2V5" stroke="#e0e0e0" stroke-width="1.1" fill="none"/><rect x="0.8" y="5" width="7.4" height="5.5" fill="none" stroke="#e0e0e0" stroke-width="1.1"/><rect x="3.8" y="6.8" width="1.4" height="2" fill="#e0e0e0"/></svg>
<div class="a" style="left:892px;top:529px;width:175px;height:126px;background:#4f4e50"></div>
<div class="a" style="left:892px;top:655px;width:184px;height:18px;background:#535254"></div>
<svg style="left:926px;top:661px" width="12" height="7" viewBox="0 0 12 7"><rect x="0.6" y="0.6" width="5" height="5.6" rx="2.5" fill="none" stroke="#7d7c7e" stroke-width="1.2"/><rect x="6.4" y="0.6" width="5" height="5.6" rx="2.5" fill="none" stroke="#7d7c7e" stroke-width="1.2"/></svg>
<div class="t" style="left:946px;top:659px;font-size:9px;color:#7d7c7e;font-style:italic;font-family:'Liberation Serif',serif">fx</div>
<svg style="left:966px;top:659.5px" width="13" height="10" viewBox="0 0 13 10"><rect x="0" y="0" width="13" height="10" rx="1" fill="#e4e4e4"/><circle cx="6.5" cy="5" r="2.8" fill="#535254"/></svg>
<svg style="left:987px;top:659px" width="11" height="11" viewBox="0 0 11 11"><circle cx="5.5" cy="5.5" r="5" fill="#e4e4e4"/><path d="M2 9L9 2" stroke="#535254" stroke-width="1.2"/><path d="M9.2 2.3A5 5 0 0 1 2.5 9.5z" fill="#bbb"/></svg>
<svg style="left:1006px;top:660px" width="13" height="10" viewBox="0 0 13 10"><path d="M0 1H5L6 2.5H13V10H0z" fill="#e4e4e4"/></svg>
<svg style="left:1027px;top:659px" width="11" height="11" viewBox="0 0 11 11"><path d="M0.6 0.6H10.4V10.4H4L0.6 7z" fill="none" stroke="#e4e4e4" stroke-width="1.2"/><path d="M3 3H8V8H6V5H3z" fill="#e4e4e4"/></svg>
<svg style="left:1048px;top:658.5px" width="9" height="12" viewBox="0 0 9 12"><path d="M0.5 2H8.5M3 2V0.8H6V2" stroke="#77767a" stroke-width="1" fill="none"/><path d="M1.3 3H7.7L7.2 11.5H1.8z" fill="#77767a"/></svg>
<div class="a" style="left:998px;top:670px;width:2px;height:2px;background:#ddd"></div>
<div id="white" class="a"></div>
</body>
</html>
